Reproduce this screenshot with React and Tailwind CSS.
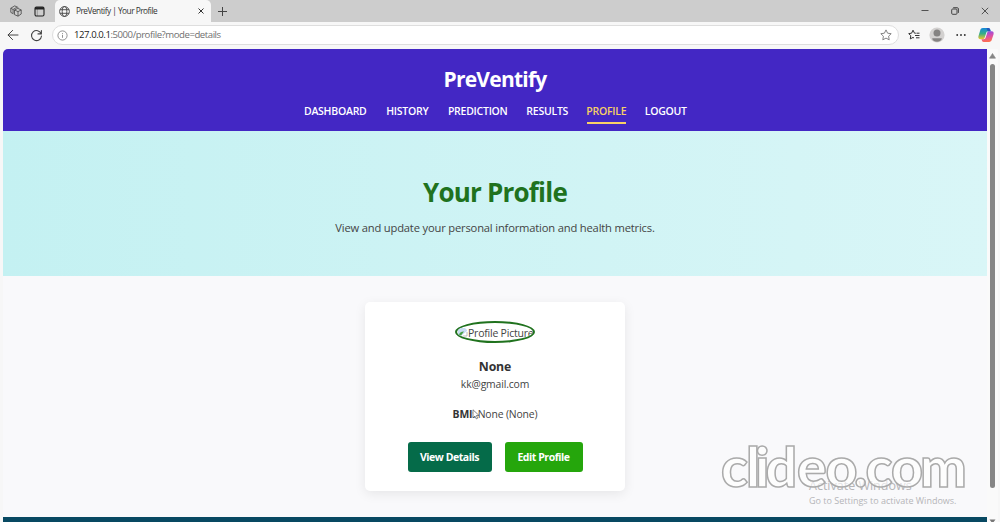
import React from "react";

function BrowserTabs() {
  return (
    <div className="flex h-[22px] bg-[#cdcdcd] text-[#333]">
      <div className="flex w-[55px] items-center gap-[12px] pl-[10px]">
        <svg className="size-[12px]" viewBox="0 0 12 12" fill="none" stroke="#444" strokeWidth="0.8" strokeLinejoin="round">
          <path d="M4.5 5 7.8 3.4l3.4 1.5v4.1L8 11.2 4.5 9.6zM4.5 5 8 6.6l3.2-1.6M8 6.6v4.5" />
          <path d="M3.4 8.8.8 7.4V3.2L4.7.9 8.3 2.5M.8 3.3l2.3 1.2L6.8 2.3M3.1 4.5v4" />
        </svg>
        <svg className="size-[11px]" viewBox="0 0 11 11" fill="none" stroke="#222" strokeWidth="1.1">
          <rect x="1" y="1" width="9" height="9" rx="1.4" />
          <path d="M1 2.3h9" strokeWidth="2.4" />
          <path d="M3.3 3v7" strokeWidth="0.3" />
        </svg>
      </div>
      <div className="flex h-full w-[156px] items-center rounded-t-[5px] bg-[#f7f7f7] pl-[4px]">
        <svg className="size-[11px] shrink-0" viewBox="0 0 11 11" fill="none" stroke="#444" strokeWidth="0.9">
          <circle cx="5.5" cy="5.5" r="4.9" />
          <ellipse cx="5.5" cy="5.5" rx="2.3" ry="4.9" />
          <path d="M1 3.7h9M1 7.3h9" />
        </svg>
        <span className="ml-[6px] w-[122px] text-[8.3px] leading-[12px] tracking-[-0.51px] whitespace-nowrap">
          PreVentify | Your Profile
        </span>
        <svg className="size-[6px] shrink-0" viewBox="0 0 6 6" stroke="#333" strokeWidth="1">
          <path d="M.5.5l5 5M5.5.5l-5 5" />
        </svg>
      </div>
      <div className="flex flex-1 items-center pl-[7px]">
        <svg className="size-[9px]" viewBox="0 0 9 9" stroke="#444" strokeWidth="1">
          <path d="M4.5 0v9M0 4.5h9" />
        </svg>
      </div>
      <div className="flex items-center gap-[22px] pr-[11px]">
        <svg className="size-[8px]" viewBox="0 0 8 8" stroke="#444" strokeWidth="0.9">
          <path d="M.5 3.5h7" />
        </svg>
        <svg className="size-[8px]" viewBox="0 0 8 8" fill="none" stroke="#444" strokeWidth="1">
          <rect x=".7" y="2" width="5.3" height="5.3" rx="1" />
          <path d="M2.2.7h4a1.2 1.2 0 0 1 1.2 1.2v4" />
        </svg>
        <svg className="size-[8px]" viewBox="0 0 8 8" stroke="#444" strokeWidth="0.9">
          <path d="M.8.8l6.4 6.4M7.2.8.8 7.2" />
        </svg>
      </div>
    </div>
  );
}

function AddressBar() {
  return (
    <div className="flex h-[26px] items-center bg-[#f7f7f7] pl-[7px]">
      <svg className="size-[12px]" viewBox="0 0 12 12" fill="none" stroke="#444" strokeWidth="1" strokeLinecap="round">
        <path d="M11 6H1.2M5.6 1.4 1 6l4.6 4.6" />
      </svg>
      <svg className="ml-[11px] size-[13px]" viewBox="0 0 13 13" fill="none" stroke="#444" strokeWidth="1.1" strokeLinecap="round">
        <path d="M11.2 4.8A5 5 0 1 0 11.5 7M11.4 1.5v3.4H8" />
      </svg>
      <div className="ml-[9px] flex h-[20px] w-[847px] items-center rounded-full border border-[#dedede] bg-white pr-[6px] pl-[4px]">
        <svg className="size-[11px]" viewBox="0 0 11 11" fill="none" stroke="#777" strokeWidth="0.8">
          <circle cx="5.5" cy="5.5" r="4.6" />
          <path d="M5.5 4.8v3M5.5 3v.9" />
        </svg>
        <span className="ml-[6px] flex-1 text-[9.6px] tracking-[-0.45px] whitespace-nowrap text-[#707070]">
          <span className="text-[#222]">127.0.0.1</span>:5000/profile?mode=details
        </span>
        <svg className="size-[12px]" viewBox="0 0 12 12" fill="none" stroke="#777" strokeWidth="0.9" strokeLinejoin="round">
          <path d="M6 .9 7.6 4.2l3.6.5-2.6 2.5.6 3.6L6 9.1l-3.2 1.7.6-3.6L.8 4.7l3.6-.5z" />
        </svg>
      </div>
      <svg className="ml-[9px] size-[12px]" viewBox="0 0 12 12" fill="none" stroke="#333" strokeWidth="1" strokeLinejoin="round">
        <path d="M7.8 4.2H6.5L5 1.2 3.6 4.2.7 4.6l2.1 2.1-.5 3.2L5 8.4l1 .6M8.5 4.2h3M7 6.5h4.5M8 8.8h3.5" />
      </svg>
      <svg className="ml-[9px] size-[16px]" viewBox="0 0 16 16">
        <circle cx="8" cy="8" r="7.6" fill="#d3d1d0" />
        <circle cx="8" cy="6.1" r="3.5" fill="#858382" />
        <path d="M3.2 11.2h9.6c0 2.2-2.2 3.6-4.8 3.6s-4.8-1.4-4.8-3.6z" fill="#858382" />
      </svg>
      <svg className="ml-[11px] h-[4px] w-[10px]" viewBox="0 0 10 4" fill="#333">
        <circle cx="1.2" cy="2" r="0.95" />
        <circle cx="5" cy="2" r="0.95" />
        <circle cx="8.8" cy="2" r="0.95" />
      </svg>
      <svg className="ml-[12px] size-[16px]" viewBox="0 0 15 15">
        <defs>
          <linearGradient id="copilotLeft" x1="0" y1="0" x2="0" y2="1">
            <stop offset="0" stopColor="#1689dc" />
            <stop offset="0.5" stopColor="#35ad87" />
            <stop offset="1" stopColor="#f3c52d" />
          </linearGradient>
          <linearGradient id="copilotRight" x1="0.3" y1="0" x2="0.5" y2="1">
            <stop offset="0" stopColor="#8d4be8" />
            <stop offset="0.5" stopColor="#dc4fa6" />
            <stop offset="1" stopColor="#ff704b" />
          </linearGradient>
        </defs>
        <path d="M4.6 1h5.1c1 0 1.4.7 1.7 1.6l.4 1.5H9.6c-1.2 0-1.7.7-2 1.8l-1.2 3.8c-.4 1.2-.9 1.8-2.1 1.8H2.2C.7 11.5 0 10.2.4 8.7l1.7-5.7C2.5 1.7 3.3 1 4.6 1z" fill="url(#copilotLeft)" />
        <path d="M10.4 14H5.3c-1 0-1.4-.7-1.7-1.6l-.3-.9h1.9c1.2 0 1.8-.7 2.1-1.8l1.2-3.8c.3-1.2.9-1.8 2.1-1.8h2.2c1.5 0 2.2 1.2 1.8 2.7l-1.7 5.2c-.4 1.3-1.2 2-2.5 2z" fill="url(#copilotRight)" />
        <path d="M8 1h1.8c1 0 1.4.7 1.7 1.6l.4 1.5H9z" fill="#2458bd" />
      </svg>
    </div>
  );
}

function SiteHeader() {
  return (
    <header className="flex h-[82px] shrink-0 flex-col items-center rounded-tl-[5px] bg-[#4327c4] pt-[16px] text-white">
      <h1 className="text-[21px] leading-[28px] font-bold tracking-[-0.75px]">PreVentify</h1>
      <nav className="mt-[9px] flex gap-[19.5px] text-[10.5px] leading-[18px] font-semibold tracking-[-0.25px] whitespace-nowrap text-white">
        <a className="flex w-[63px] justify-center">DASHBOARD</a>
        <a className="flex w-[42px] justify-center">HISTORY</a>
        <a className="flex w-[60px] justify-center">PREDICTION</a>
        <a className="flex w-[40px] justify-center">RESULTS</a>
        <a className="flex h-[22px] w-[39px] justify-center border-b-2 border-[#f8d066] text-[#f8d066]">PROFILE</a>
        <a className="flex w-[41px] justify-center">LOGOUT</a>
      </nav>
    </header>
  );
}

function ProfileCard() {
  return (
    <div className="flex h-[189px] w-[260px] flex-col items-center rounded-[5px] bg-white pt-[19px] text-[#444] shadow-[0_3px_12px_rgba(0,0,0,0.08)]">
      <div className="flex h-[22px] w-[80px] shrink-0 items-center overflow-hidden rounded-[50%] border-[2.5px] border-[#20721e] pt-[3px] text-[10.5px] tracking-[-0.22px] whitespace-nowrap">
        <svg className="-mt-[3px] h-[10px] w-[11px] shrink-0" viewBox="0 0 11 10">
          <path d="M1 1h7l2 2v1L4 9H1z" fill="#c9dcf4" />
          <path d="M2 8.5c0-2.5 2-4 5-4L4 8.5z" fill="#49a044" />
          <path d="M10 5v4H6" fill="none" stroke="#aaa" strokeWidth="0.8" />
        </svg>
        <span>Profile Picture</span>
      </div>
      <h3 className="mt-[15px] text-[12.3px] leading-[18px] font-bold tracking-[-0.15px] text-[#333]">None</h3>
      <p className="text-[10.4px] leading-[16px] tracking-[-0.15px]">kk@gmail.com</p>
      <div className="relative mt-[14px] text-[10.4px] leading-[16px] tracking-[-0.15px] whitespace-nowrap">
        <strong className="text-[#333]">BMI:</strong> None (None)
        <svg className="absolute top-[3px] left-[19px] h-[11px] w-[8px]" viewBox="0 0 8 11">
          <path d="M1 .8v8l2-1.7 1.3 2.8 1.4-.7-1.3-2.7h2.7z" fill="#fff" stroke="#555" strokeWidth="0.7" />
        </svg>
      </div>
      <div className="mt-[20px] flex gap-[13px] text-[10.5px] font-bold tracking-[-0.45px] whitespace-nowrap text-white">
        <button className="h-[30px] w-[84px] rounded-[3px] bg-[#056b49] pt-px">View Details</button>
        <button className="h-[30px] w-[78px] rounded-[3px] bg-[#25a60c] pt-px">Edit Profile</button>
      </div>
    </div>
  );
}

function Scrollbar() {
  return (
    <div className="flex w-[11px] flex-col items-center bg-[#fafafa] pt-[4px]">
      <svg className="h-[6px] w-[7px] shrink-0" viewBox="0 0 7 6">
        <path d="M3.5.5 6.5 5.2H.5z" fill="#858585" stroke="#858585" strokeWidth="0.6" strokeLinejoin="round" />
      </svg>
      <div className="mt-[5px] h-[424px] w-[5px] shrink-0 rounded-full bg-[#858585]" />
      <svg className="mt-[31px] h-[5px] w-[7px] shrink-0" viewBox="0 0 7 5">
        <path d="M.5.5h6l-3 4z" fill="#777" />
      </svg>
    </div>
  );
}

export default function App() {
  return (
    <div className="relative h-[522px] w-[1000px] overflow-hidden bg-[#f7f7f7] font-['Open_Sans','Noto_Sans',sans-serif]">
      <BrowserTabs />
      <AddressBar />
      <div className="flex h-[474px] overflow-hidden pt-px pl-[3px]">
        <div className="flex w-[984px] flex-col rounded-tl-[5px] bg-[#f9f9fb]">
          <SiteHeader />
          <section className="flex h-[145px] shrink-0 flex-col items-center bg-linear-to-r from-[#c4f1f2] to-[#d9f6f7] pt-[43px]">
            <h2 className="text-[26px] leading-[36px] font-bold tracking-[-0.8px] text-[#20721e]">Your Profile</h2>
            <p className="mt-[9px] text-[11.2px] leading-[17px] tracking-[-0.18px] whitespace-nowrap text-[#444]">
              View and update your personal information and health metrics.
            </p>
          </section>
          <main className="flex h-[241px] shrink-0 justify-center pt-[26px]">
            <ProfileCard />
          </main>
          <footer className="h-[5px] shrink-0 bg-[#084962]" />
        </div>
        <Scrollbar />
      </div>
      <div className="absolute top-[477px] left-[809px] whitespace-nowrap text-[#b5b5b8]">
        <p className="text-[12.5px] leading-[17px]">Activate Windows</p>
        <p className="text-[9px] leading-[14px]">Go to Settings to activate Windows.</p>
      </div>
      <svg className="absolute top-[426px] left-[716px] h-[90px] w-[270px]" viewBox="0 0 270 90">
        <text
          x="5 30 39 49.5 81 109.5 138 149.5 175 204"
          y="61"
          fontFamily="Lato, sans-serif"
          fontSize="55.5"
          fontWeight="900"
          fill="#fff"
          fillOpacity="0.6"
          stroke="#aaa"
          strokeWidth="1.5"
        >
          clideo.com
        </text>
      </svg>
    </div>
  );
}
